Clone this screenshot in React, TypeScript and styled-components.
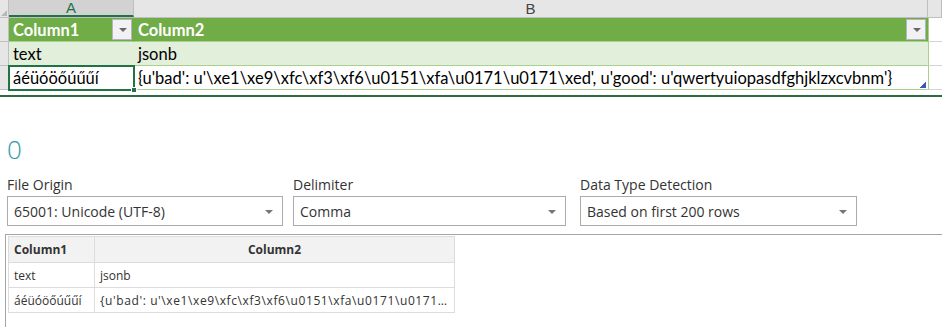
import React from "react";
import styled, { createGlobalStyle } from "styled-components";

const Global = createGlobalStyle`
  html, body { margin: 0; padding: 0; background: #fff; }
  body { width: 942px; height: 327px; overflow: hidden; }
  * { box-sizing: border-box; }
`;

const COLS = "9px 125px 794px 1fr";

const Sheet = styled.div`
  font-family: Lato, "Liberation Sans", sans-serif;
  font-size: 16.5px;
  color: #000;
  border-bottom: 2px solid #2f6a3f;
  padding-bottom: 5px;
`;

const HeaderBand = styled.div`
  display: grid;
  grid-template-columns: ${COLS};
  height: 18px;
  background: #e6e6e6;
  border-bottom: 1px solid #bfbfbf;
`;

const ColHead = styled.div<{ $selected?: boolean }>`
  display: flex;
  align-items: center;
  justify-content: center;
  font-family: "Liberation Sans", sans-serif;
  font-size: 15px;
  color: ${(p) => (p.$selected ? "#217346" : "#444")};
  background: ${(p) => (p.$selected ? "#d2d2d2" : "#e6e6e6")};
  border-right: 1px solid #bfbfbf;
  border-bottom: ${(p) => (p.$selected ? "2px solid #217346" : "none")};
  line-height: 1;
`;

const Corner = styled.div`
  position: relative;
  background: #e6e6e6;
  border-right: 1px solid #bfbfbf;
  &::after {
    content: "";
    position: absolute;
    right: 1px;
    bottom: 1px;
    border-left: 6px solid transparent;
    border-bottom: 6px solid #b8b8b8;
  }
`;

const Row = styled.div`
  display: grid;
  grid-template-columns: ${COLS};
  height: 24px;
`;

const RowHead = styled.div`
  background: #e6e6e6;
  border-right: 1px solid #bfbfbf;
  border-bottom: 1px solid #bfbfbf;
`;

type Tone = "head" | "band" | "plain";

const Cell = styled.div<{ $tone: Tone; $bold?: boolean; $selected?: boolean }>`
  position: relative;
  display: flex;
  align-items: center;
  padding: 0 4px;
  white-space: nowrap;
  overflow: visible;
  font-weight: ${(p) => (p.$bold ? 700 : 400)};
  color: ${(p) => (p.$tone === "head" ? "#fff" : "#000")};
  background: ${(p) =>
    p.$tone === "head" ? "#70ad47" : p.$tone === "band" ? "#e2efda" : "#fff"};
  border-bottom: 1px solid #a9d08e;
  border-right: 1px solid
    ${(p) => (p.$tone === "head" ? "#70ad47" : "transparent")};
  ${(p) =>
    p.$selected &&
    `outline: 2px solid #217346; outline-offset: -1px; z-index: 2;`}
`;

const EmptyCell = styled.div`
  border-left: 1px solid #a9d08e;
  border-bottom: 1px solid #d4d4d4;
  background: #fff;
`;

const FilterBtn = styled.div`
  position: absolute;
  right: 1px;
  top: 1px;
  width: 20px;
  height: 21px;
  background: #f2f2f4;
  border: 1px solid #b4b4c4;
  &::after {
    content: "";
    position: absolute;
    left: 6px;
    top: 8px;
    border-left: 4px solid transparent;
    border-right: 4px solid transparent;
    border-top: 4px solid #666;
  }
`;

const FillHandle = styled.div`
  position: absolute;
  right: -4px;
  bottom: -4px;
  width: 6px;
  height: 6px;
  background: #217346;
  border: 1px solid #fff;
  z-index: 3;
`;

const ResizeHandle = styled.div`
  position: absolute;
  right: 1px;
  bottom: 1px;
  width: 6px;
  height: 6px;
  background: linear-gradient(135deg, transparent 45%, #3b58b8 45%);
`;

const Lower = styled.div`
  font-family: "Open Sans", "Noto Sans", sans-serif;
  color: #333;
  padding: 0 0 0 7px;
`;

const Count = styled.div`
  font-family: "Open Sans", sans-serif;
  font-weight: 300;
  font-size: 26px;
  color: #2b9aa6;
  line-height: 30px;
  margin-top: 37px;
`;

const Options = styled.div`
  display: flex;
  gap: 10px;
  margin-top: 11px;
`;

const Field = styled.div<{ $w: number; $gap?: number }>`
  width: ${(p) => p.$w}px;
  margin-right: ${(p) => p.$gap ?? 0}px;
  display: flex;
  flex-direction: column;
`;

const Label = styled.div`
  font-size: 14px;
  line-height: 19px;
  color: #333;
  height: 21px;
`;

const Select = styled.div`
  position: relative;
  height: 30px;
  border: 1px solid #ababab;
  display: flex;
  align-items: center;
  padding-left: 6px;
  font-size: 14px;
  color: #333;
  &::after {
    content: "";
    position: absolute;
    right: 9px;
    top: 13px;
    border-left: 4px solid transparent;
    border-right: 4px solid transparent;
    border-top: 4px solid #777;
  }
`;

const Preview = styled.div`
  margin-top: 8px;
  margin-left: -2px;
  border-top: 1px solid #a6a6a6;
  border-left: 1px solid #a6a6a6;
  padding: 1px 0 0 2px;
  height: 100px;
`;

const Table = styled.table`
  border-collapse: collapse;
  font-family: "Open Sans", "Noto Sans", sans-serif;
  font-size: 12px;
  color: #333;
  table-layout: fixed;
  width: 447px;
`;

const Th = styled.th<{ $center?: boolean }>`
  height: 26px;
  background: #f2f2f2;
  border: 1px solid #dcdcdc;
  font-weight: 700;
  text-align: ${(p) => (p.$center ? "center" : "left")};
  padding: 0 5px;
`;

const Td = styled.td<{ $wide?: boolean }>`
  height: 25px;
  border: 1px solid #dcdcdc;
  padding: 0 5px;
  white-space: nowrap;
  overflow: hidden;
  text-overflow: ellipsis;
  letter-spacing: ${(p) => (p.$wide ? "0.6px" : "0")};
`;

const RAW =
  "{u'bad': u'\\xe1\\xe9\\xfc\\xf3\\xf6\\u0151\\xfa\\u0171\\u0171\\xed', u'good': u'qwertyuiopasdfghjklzxcvbnm'}";
const ACCENT = "áéüóöőúűűí";

export default function App() {
  return (
    <>
      <Global />
      <Sheet>
        <HeaderBand>
          <Corner />
          <ColHead $selected>A</ColHead>
          <ColHead>B</ColHead>
          <ColHead />
        </HeaderBand>
        <Row>
          <RowHead />
          <Cell $tone="head" $bold>
            Column1
            <FilterBtn />
          </Cell>
          <Cell $tone="head" $bold>
            Column2
            <FilterBtn />
          </Cell>
          <EmptyCell />
        </Row>
        <Row>
          <RowHead />
          <Cell $tone="band">text</Cell>
          <Cell $tone="band">jsonb</Cell>
          <EmptyCell />
        </Row>
        <Row>
          <RowHead />
          <Cell $tone="plain" $selected>
            {ACCENT}
            <FillHandle />
          </Cell>
          <Cell $tone="plain">
            {RAW}
            <ResizeHandle />
          </Cell>
          <EmptyCell />
        </Row>
      </Sheet>
      <Lower>
        <Count>0</Count>
        <Options>
          <Field $w={276}>
            <Label>File Origin</Label>
            <Select>65001: Unicode (UTF-8)</Select>
          </Field>
          <Field $w={273} $gap={4}>
            <Label>Delimiter</Label>
            <Select>Comma</Select>
          </Field>
          <Field $w={277}>
            <Label>Data Type Detection</Label>
            <Select>Based on first 200 rows</Select>
          </Field>
        </Options>
        <Preview>
          <Table>
            <colgroup>
              <col style={{ width: 86 }} />
              <col />
            </colgroup>
            <thead>
              <tr>
                <Th>Column1</Th>
                <Th $center>Column2</Th>
              </tr>
            </thead>
            <tbody>
              <tr>
                <Td>text</Td>
                <Td>jsonb</Td>
              </tr>
              <tr>
                <Td>{ACCENT}</Td>
                <Td $wide>{RAW}</Td>
              </tr>
            </tbody>
          </Table>
        </Preview>
      </Lower>
    </>
  );
}
